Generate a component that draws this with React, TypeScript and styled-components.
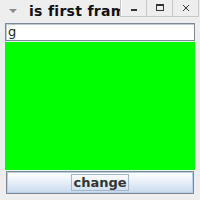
import React from 'react'
import styled, {createGlobalStyle} from "styled-components";

const Global = createGlobalStyle`
  html, body {
    margin: 0;
    padding: 0;
    background: #eeeeee;
  }
  #root {
    width: 200px;
    height: 200px;
  }
`

const S = {
    Frame: styled.div`
      width: 200px;
      height: 200px;
      box-sizing: border-box;
      background: #eeeeee;
      display: flex;
      flex-direction: column;
      overflow: hidden;
      font-family: "DejaVu Sans", sans-serif;
    `,
    TitleBar: styled.div`
      height: 22px;
      display: flex;
      align-items: center;
      position: relative;
      padding-left: 9px;
    `,
    MenuArrow: styled.div`
      width: 0;
      height: 0;
      border-left: 4px solid transparent;
      border-right: 4px solid transparent;
      border-top: 4px solid #8a8a8a;
      margin-right: 12px;
      margin-top: 1px;
    `,
    Title: styled.div`
      font-weight: bold;
      font-size: 14px;
      letter-spacing: 0.3px;
      color: #111;
      white-space: nowrap;
    `,
    Controls: styled.div`
      position: absolute;
      top: 0;
      right: 1px;
      display: flex;
      height: 16px;
      background: #eeeeee;
      border: 1px solid #c8c8c8;
      border-top: none;
      box-shadow: inset 1px 0 0 #ffffff;
    `,
    Control: styled.div`
      width: 25px;
      height: 16px;
      display: flex;
      align-items: center;
      justify-content: center;
      & + & {
        border-left: 1px solid #c8c8c8;
      }
    `,
    Body: styled.div`
      flex: 1;
      display: flex;
      flex-direction: column;
      padding: 2px 5px 6px 5px;
    `,
    Field: styled.div`
      height: 18px;
      box-sizing: border-box;
      background: #ffffff;
      border: 1px solid #7a8a99;
      box-shadow: inset 1px 1px 0 #c0c8d0;
      font-size: 13px;
      line-height: 16px;
      padding-left: 2px;
      color: #222;
      margin-bottom: 1px;
    `,
    Canvas: styled.div`
      height: 128px;
      background: #00ff00;
      margin-bottom: 1px;
    `,
    Button: styled.div`
      height: 23px;
      margin: 0 1px;
      box-sizing: border-box;
      border: 1px solid #7a8a99;
      box-shadow: inset 0 0 0 1px #b8cfe5;
      background: linear-gradient(#ffffff 0%, #f0f4fa 35%, #c8daee 100%);
      display: flex;
      align-items: center;
      justify-content: center;
    `,
    Label: styled.div`
      font-weight: bold;
      font-size: 13px;
      color: #333;
      border: 1px solid #a3b8cc;
      padding: 0 1px;
      line-height: 15px;
    `,
}

function App() {
    return (
        <>
            <Global/>
            <S.Frame>
                <S.TitleBar>
                    <S.MenuArrow/>
                    <S.Title>is first frame</S.Title>
                    <S.Controls>
                        <S.Control>
                            <svg width="10" height="10" viewBox="0 0 10 10"><rect x="2" y="6" width="6" height="2" fill="#333"/></svg>
                        </S.Control>
                        <S.Control>
                            <svg width="10" height="10" viewBox="0 0 10 10"><rect x="1.5" y="1.5" width="7" height="6" fill="none" stroke="#333"/><rect x="1" y="1" width="8" height="2" fill="#333"/></svg>
                        </S.Control>
                        <S.Control>
                            <svg width="10" height="10" viewBox="0 0 10 10"><path d="M2 2 L8 8 M8 2 L2 8" stroke="#333" strokeWidth="1"/></svg>
                        </S.Control>
                    </S.Controls>
                </S.TitleBar>
                <S.Body>
                    <S.Field>g</S.Field>
                    <S.Canvas/>
                    <S.Button><S.Label>change</S.Label></S.Button>
                </S.Body>
            </S.Frame>
        </>
    )
}

export default App;
